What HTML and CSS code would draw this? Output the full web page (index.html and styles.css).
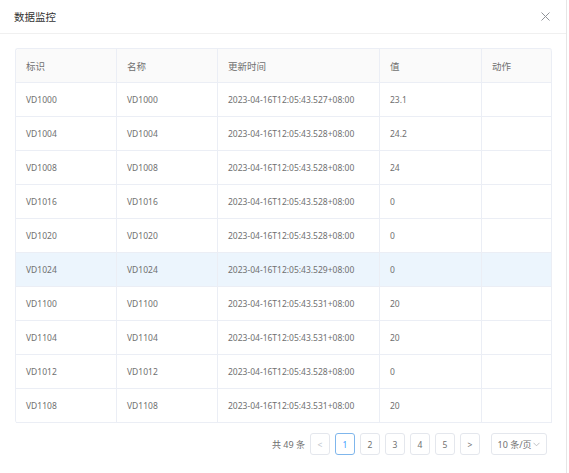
FILE: index.html
```html
<!DOCTYPE html>
<html lang="zh">
<head>
    <meta charset="UTF-8">
    <title>数据监控</title>
    <link rel="stylesheet" href="styles.css">
</head>
<body>
    <div class="dialog">
        <div class="dialog-header">
            <span class="dialog-title">数据监控</span>
            <span class="dialog-close">
                <svg width="9" height="9" viewBox="0 0 9 9"><path d="M0.5 0.5L8.5 8.5M8.5 0.5L0.5 8.5" stroke="#909399" stroke-width="1" fill="none"/></svg>
            </span>
        </div>
        <div class="dialog-body">
            <table class="data-table">
                <colgroup>
                    <col style="width:101px">
                    <col style="width:101px">
                    <col style="width:162px">
                    <col style="width:102px">
                    <col>
                </colgroup>
                <thead>
                    <tr><th>标识</th><th>名称</th><th>更新时间</th><th>值</th><th>动作</th></tr>
                </thead>
                <tbody>
                    <tr><td>VD1000</td><td>VD1000</td><td>2023-04-16T12:05:43.527+08:00</td><td>23.1</td><td></td></tr>
                    <tr><td>VD1004</td><td>VD1004</td><td>2023-04-16T12:05:43.528+08:00</td><td>24.2</td><td></td></tr>
                    <tr><td>VD1008</td><td>VD1008</td><td>2023-04-16T12:05:43.528+08:00</td><td>24</td><td></td></tr>
                    <tr><td>VD1016</td><td>VD1016</td><td>2023-04-16T12:05:43.528+08:00</td><td>0</td><td></td></tr>
                    <tr><td>VD1020</td><td>VD1020</td><td>2023-04-16T12:05:43.528+08:00</td><td>0</td><td></td></tr>
                    <tr class="hover"><td>VD1024</td><td>VD1024</td><td>2023-04-16T12:05:43.529+08:00</td><td>0</td><td></td></tr>
                    <tr><td>VD1100</td><td>VD1100</td><td>2023-04-16T12:05:43.531+08:00</td><td>20</td><td></td></tr>
                    <tr><td>VD1104</td><td>VD1104</td><td>2023-04-16T12:05:43.531+08:00</td><td>20</td><td></td></tr>
                    <tr><td>VD1012</td><td>VD1012</td><td>2023-04-16T12:05:43.528+08:00</td><td>0</td><td></td></tr>
                    <tr><td>VD1108</td><td>VD1108</td><td>2023-04-16T12:05:43.531+08:00</td><td>20</td><td></td></tr>
                </tbody>
            </table>
            <div class="pagination">
                <span class="total">共 49 条</span>
                <span class="pager">
                    <span class="page-btn arrow">&lt;</span>
                    <span class="page-btn active">1</span>
                    <span class="page-btn">2</span>
                    <span class="page-btn">3</span>
                    <span class="page-btn">4</span>
                    <span class="page-btn">5</span>
                    <span class="page-btn arrow dark">&gt;</span>
                </span>
                <span class="page-size">10 条/页
                    <svg width="7" height="5" viewBox="0 0 7 5"><path d="M0.5 0.8L3.5 3.8L6.5 0.8" stroke="#b0b3b8" stroke-width="0.8" fill="none"/></svg>
                </span>
            </div>
        </div>
    </div>
</body>
</html>
```

FILE: styles.css
```css
body {
    margin: 0;
    padding: 0;
    background: #ffffff;
    font-family: "Noto Sans", "Noto Sans CJK SC", sans-serif;
    color: #666;
}

.dialog {
    width: 566px;
    height: 473px;
    border-right: 1px solid #e6e6e6;
    background: #fff;
}

.dialog-header {
    height: 33px;
    border-bottom: 1px solid #f0f0f0;
    display: flex;
    align-items: center;
    justify-content: space-between;
    padding: 0 14px 0 14px;
}

.dialog-title {
    font-size: 10.5px;
    color: #333;
}

.dialog-close {
    display: flex;
    margin-right: 2px;
}

.dialog-body {
    padding: 14px 14px 0 15px;
}

.data-table {
    width: 537px;
    border-collapse: separate;
    border-spacing: 0;
    table-layout: fixed;
    border-top: 1px solid #ebeef5;
    border-left: 1px solid #ebeef5;
    border-radius: 3px;
    font-size: 8.5px;
}

.data-table th,
.data-table td {
    height: 34px;
    padding: 0 0 0 10px;
    border-right: 1px solid #ebeef5;
    border-bottom: 1px solid #ebeef5;
    text-align: left;
    font-weight: normal;
    white-space: nowrap;
    box-sizing: border-box;
    color: #707070;
}

.data-table th {
    background: #fafafa;
    font-size: 9.5px;
}

.data-table th:first-child {
    border-top-left-radius: 3px;
}

.data-table th:last-child {
    border-top-right-radius: 3px;
}

.data-table tr.hover td {
    background: #ecf5fd;
}

.pagination {
    display: flex;
    justify-content: flex-end;
    align-items: center;
    margin-top: 10px;
    padding-right: 5px;
    font-size: 8.5px;
}

.total {
    color: #707070;
    margin-right: 5px;
    font-size: 9px;
}

.pager {
    display: flex;
    gap: 5px;
}

.page-btn {
    width: 20px;
    height: 22px;
    box-sizing: border-box;
    border: 1px solid #e4e7ed;
    border-radius: 3px;
    display: flex;
    align-items: center;
    justify-content: center;
    color: #707070;
}

.page-btn.arrow {
    color: #c0c4cc;
}

.page-btn.arrow.dark {
    color: #707070;
}

.page-btn.active {
    border-color: #7fb6ec;
    color: #409eff;
}

.page-size {
    margin-left: 11px;
    width: 56px;
    height: 22px;
    box-sizing: border-box;
    border: 1px solid #e4e7ed;
    border-radius: 3px;
    display: flex;
    align-items: center;
    justify-content: center;
    gap: 2px;
    color: #707070;
    font-size: 9px;
}
```
